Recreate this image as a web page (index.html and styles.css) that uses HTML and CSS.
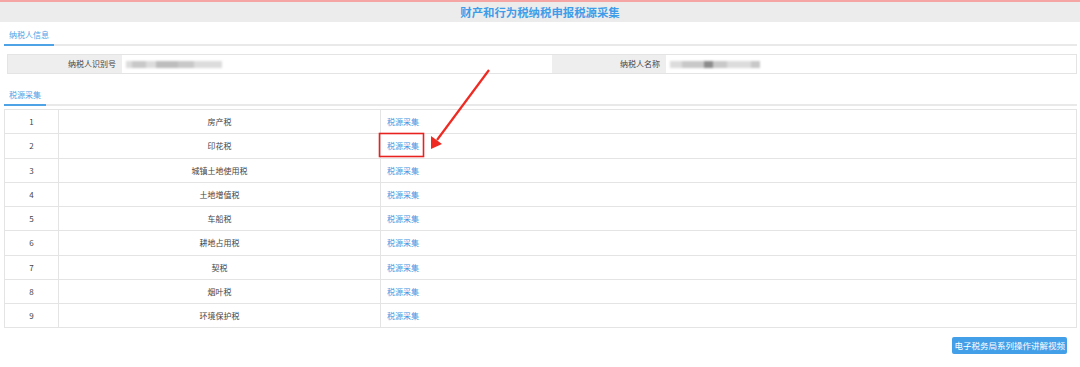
FILE: index.html
```html
<!DOCTYPE html>
<html lang="zh-CN">
<head>
    <meta charset="UTF-8">
    <title>财产和行为税纳税申报税源采集</title>
    <link rel="stylesheet" href="styles.css">
</head>
<body>
    <div class="header">财产和行为税纳税申报税源采集</div>

    <div class="page">
        <div class="tabs">
            <span class="tab active">纳税人信息</span>
        </div>

        <div class="info">
            <div class="label">纳税人识别号</div>
            <div class="value">
                <span class="blur">
                    <i class="b1" style="width:6px"></i><i class="b2" style="width:14px"></i><i class="b1" style="width:10px"></i><i class="b3" style="width:22px"></i><i class="b2" style="width:16px"></i><i class="b1" style="width:28px"></i>
                </span>
            </div>
            <div class="label">纳税人名称</div>
            <div class="value">
                <span class="blur">
                    <i class="b1" style="width:12px"></i><i class="b2" style="width:22px"></i><i class="b4" style="width:9px"></i><i class="b2" style="width:14px"></i><i class="b1" style="width:24px"></i><i class="b2" style="width:9px"></i>
                </span>
            </div>
        </div>

        <div class="tabs tabs-second">
            <span class="tab active">税源采集</span>
        </div>

        <table class="list">
            <colgroup>
                <col class="c-no">
                <col class="c-name">
                <col>
            </colgroup>
            <tr><td>1</td><td>房产税</td><td><a href="#">税源采集</a></td></tr>
            <tr><td>2</td><td>印花税</td><td><a href="#">税源采集</a></td></tr>
            <tr><td>3</td><td>城镇土地使用税</td><td><a href="#">税源采集</a></td></tr>
            <tr><td>4</td><td>土地增值税</td><td><a href="#">税源采集</a></td></tr>
            <tr><td>5</td><td>车船税</td><td><a href="#">税源采集</a></td></tr>
            <tr><td>6</td><td>耕地占用税</td><td><a href="#">税源采集</a></td></tr>
            <tr><td>7</td><td>契税</td><td><a href="#">税源采集</a></td></tr>
            <tr><td>8</td><td>烟叶税</td><td><a href="#">税源采集</a></td></tr>
            <tr><td>9</td><td>环境保护税</td><td><a href="#">税源采集</a></td></tr>
        </table>

        <div class="actions">
            <button class="video-btn">电子税务局系列操作讲解视频</button>
        </div>
    </div>

    <!-- annotation: red box + arrow -->
    <svg class="annot" width="1080" height="367" viewBox="0 0 1080 367">
        <rect x="379.5" y="133.5" width="44" height="23" fill="none" stroke="#e8231f" stroke-width="1.6"/>
        <line x1="489" y1="70" x2="437" y2="140" stroke="#ee2a22" stroke-width="2.2"/>
        <polygon points="431,149 431,136 442,144" fill="#ee2a22"/>
    </svg>
</body>
</html>
```

FILE: styles.css
```css
body {
    margin: 0;
    font-family: "Noto Sans CJK SC", "Noto Sans", sans-serif;
    color: #333;
    background: #fff;
    position: relative;
    width: 1080px;
    height: 367px;
    overflow: hidden;
}
.header {
    border-top: 2px solid #f6a5a5;
    background: #ececec;
    height: 20px;
    line-height: 20px;
    text-align: center;
    font-size: 11.4px;
    font-weight: bold;
    color: #3f9ce9;
}
.page {
    padding: 0 3px 0 4px;
}
.tabs {
    display: flex;
    align-items: flex-start;
    border-bottom: 2px solid #e9e9e9;
    height: 22px;
}
.tab {
    box-sizing: border-box;
    height: 24px;
    margin-bottom: -2px;
    padding: 4px 5px 0;
    line-height: 17px;
    font-size: 8px;
    color: #4ea3e6;
    border-bottom: 2px solid #4ea3e6;
}
.tabs-second {
    margin-top: 9px;
    height: 21px;
}
.tabs-second .tab {
    height: 23px;
    padding-top: 3px;
}
.info {
    margin: 8px 0 0 3px;
    display: grid;
    grid-template-columns: 114px 430px 114px 1fr;
    height: 20px;
    border: 1px solid #e4e4e4;
    box-sizing: border-box;
    font-size: 8px;
}
.info .label {
    background: #eeeeee;
    text-align: right;
    padding-right: 6px;
    line-height: 18px;
    color: #444;
}
.info .value {
    padding-left: 4px;
    display: flex;
    align-items: center;
}
.blur {
    display: flex;
    height: 7px;
    filter: blur(1px);
}
.blur i {
    display: block;
    height: 7px;
}
.b1 { background: #dcdcdc; }
.b2 { background: #c8c8c8; }
.b3 { background: #bdbdbd; }
.b4 { background: #8c8c8c; }
.list {
    margin-top: 3px;
    width: 100%;
    border-collapse: collapse;
    font-size: 8px;
}
.list col.c-no { width: 54px; }
.list col.c-name { width: 322px; }
.list td {
    border: 1px solid #e4e4e4;
    height: 23.25px;
    padding: 0;
    text-align: center;
    color: #444;
}
.list td:last-child {
    text-align: left;
    padding-left: 6px;
}
.list a {
    color: #3f97e3;
    text-decoration: none;
}
.actions {
    margin-top: 9px;
    display: flex;
    justify-content: flex-end;
    padding-right: 10px;
}
.video-btn {
    background: #43a0e8;
    color: #fff;
    border: none;
    border-radius: 2px;
    height: 17px;
    padding: 0 2px;
    font-family: inherit;
    font-size: 8.5px;
    line-height: 17px;
}
.annot {
    position: absolute;
    left: 0;
    top: 0;
    pointer-events: none;
}
```
